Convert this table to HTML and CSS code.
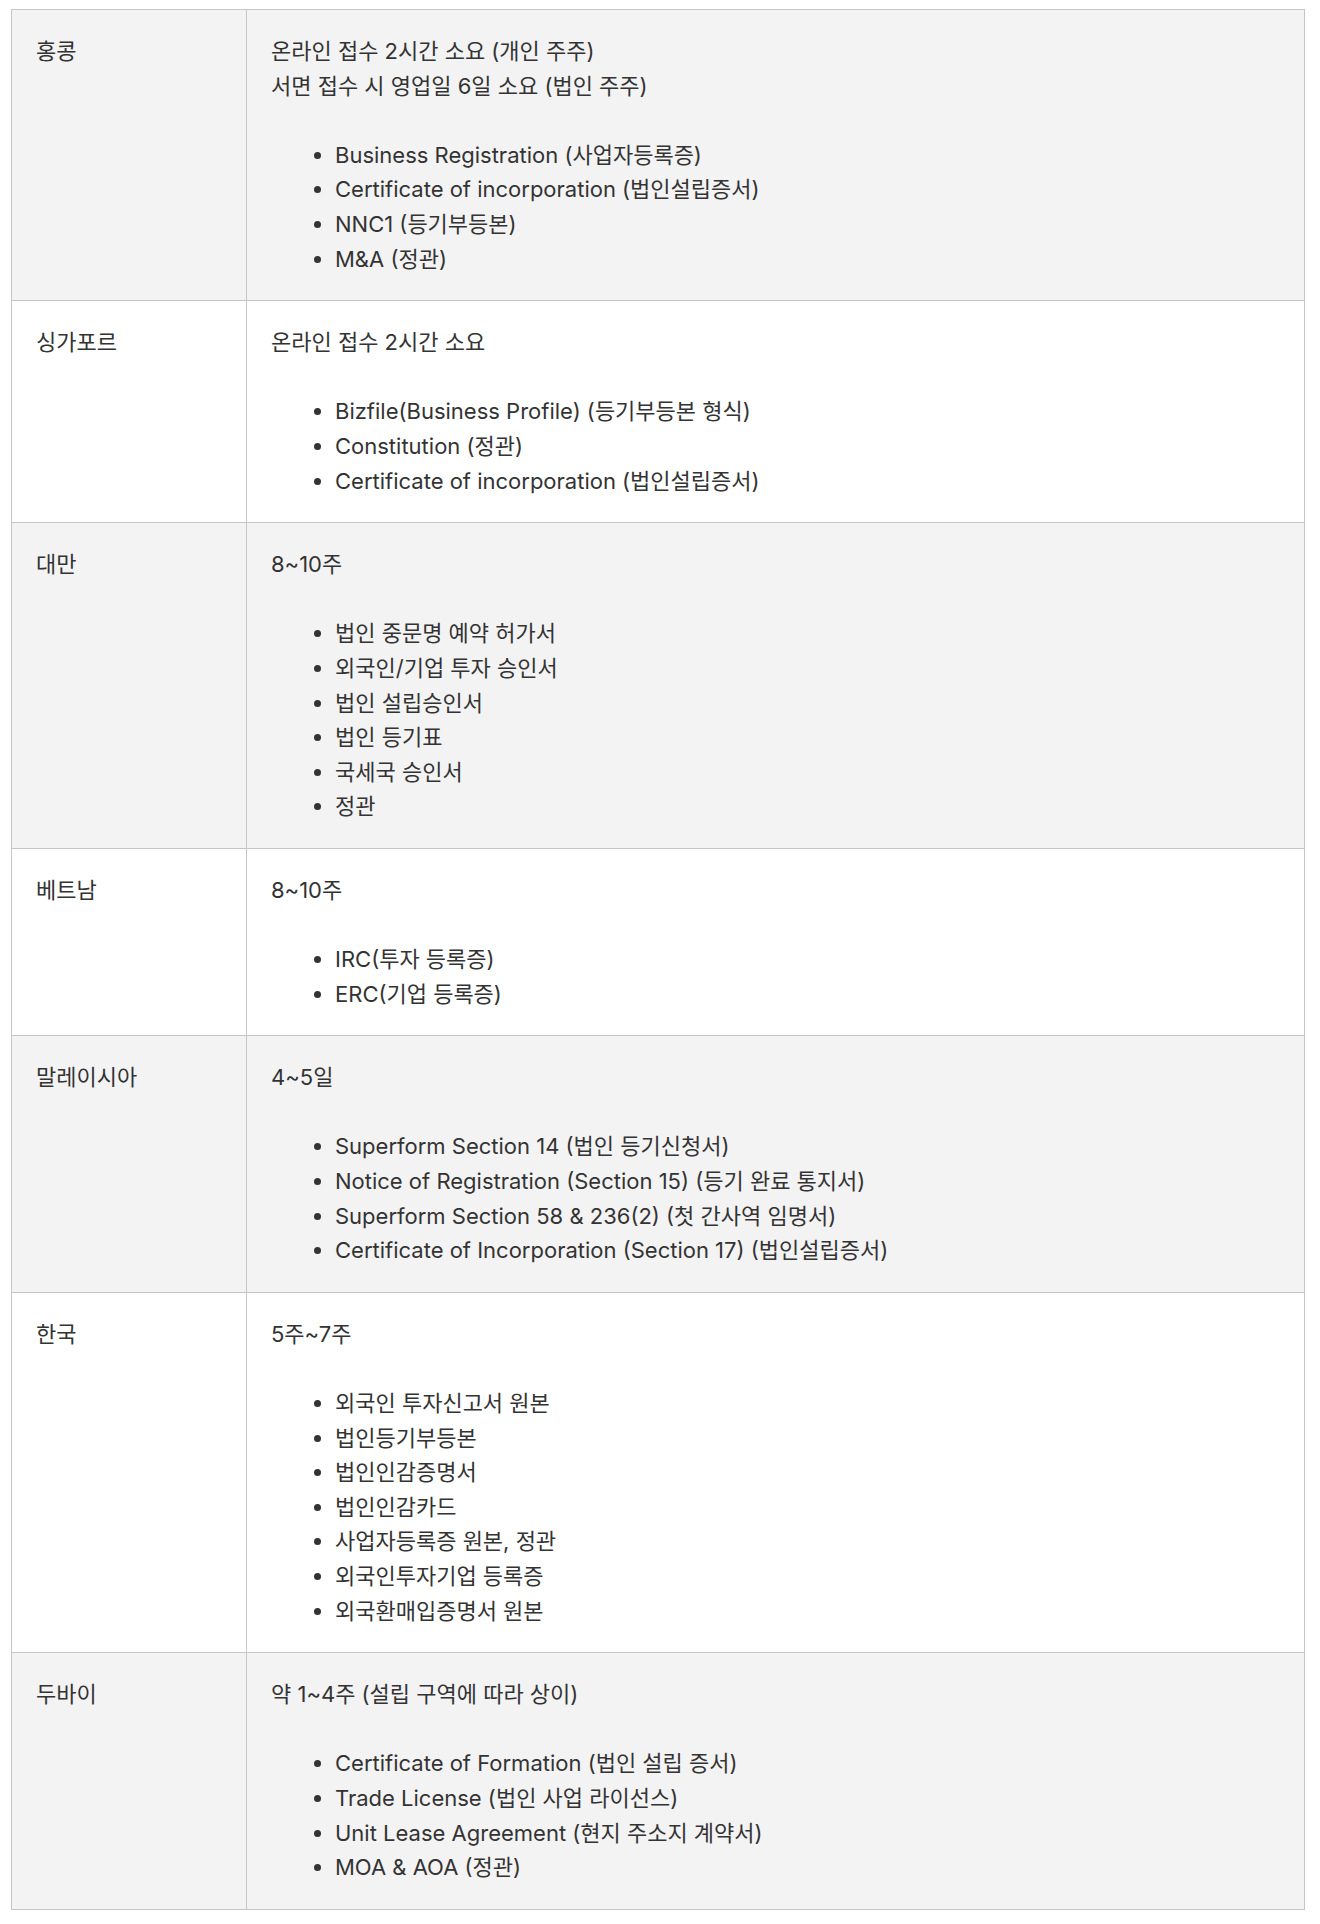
FILE: index.html
```html
<!DOCTYPE html>
<html lang="ko">
<head>
<meta charset="utf-8">
<title>법인 설립 기간 및 서류</title>
<link rel="stylesheet" href="styles.css">
</head>
<body>
<table class="docs">
  <colgroup><col class="c-country"><col class="c-detail"></colgroup>
  <tbody>
    <tr class="shade">
      <td class="country">홍콩</td>
      <td class="detail">
        <p>온라인 접수 2시간 소요 (개인 주주)<br>서면 접수 시 영업일 6일 소요 (법인 주주)</p>
        <ul>
          <li>Business Registration (사업자등록증)</li>
          <li>Certificate of incorporation (법인설립증서)</li>
          <li>NNC1 (등기부등본)</li>
          <li>M&amp;A (정관)</li>
        </ul>
      </td>
    </tr>
    <tr>
      <td class="country">싱가포르</td>
      <td class="detail">
        <p>온라인 접수 2시간 소요</p>
        <ul>
          <li>Bizfile(Business Profile) (등기부등본 형식)</li>
          <li>Constitution (정관)</li>
          <li>Certificate of incorporation (법인설립증서)</li>
        </ul>
      </td>
    </tr>
    <tr class="shade">
      <td class="country">대만</td>
      <td class="detail">
        <p>8~10주</p>
        <ul>
          <li>법인 중문명 예약 허가서</li>
          <li>외국인/기업 투자 승인서</li>
          <li>법인 설립승인서</li>
          <li>법인 등기표</li>
          <li>국세국 승인서</li>
          <li>정관</li>
        </ul>
      </td>
    </tr>
    <tr>
      <td class="country">베트남</td>
      <td class="detail">
        <p>8~10주</p>
        <ul>
          <li>IRC(투자 등록증)</li>
          <li>ERC(기업 등록증)</li>
        </ul>
      </td>
    </tr>
    <tr class="shade">
      <td class="country">말레이시아</td>
      <td class="detail">
        <p>4~5일</p>
        <ul>
          <li>Superform Section 14 (법인 등기신청서)</li>
          <li>Notice of Registration (Section 15) (등기 완료 통지서)</li>
          <li>Superform Section 58 &amp; 236(2) (첫 간사역 임명서)</li>
          <li>Certificate of Incorporation (Section 17) (법인설립증서)</li>
        </ul>
      </td>
    </tr>
    <tr>
      <td class="country">한국</td>
      <td class="detail">
        <p>5주~7주</p>
        <ul>
          <li>외국인 투자신고서 원본</li>
          <li>법인등기부등본</li>
          <li>법인인감증명서</li>
          <li>법인인감카드</li>
          <li>사업자등록증 원본, 정관</li>
          <li>외국인투자기업 등록증</li>
          <li>외국환매입증명서 원본</li>
        </ul>
      </td>
    </tr>
    <tr class="shade">
      <td class="country">두바이</td>
      <td class="detail">
        <p>약 1~4주 (설립 구역에 따라 상이)</p>
        <ul>
          <li>Certificate of Formation (법인 설립 증서)</li>
          <li>Trade License (법인 사업 라이선스)</li>
          <li>Unit Lease Agreement (현지 주소지 계약서)</li>
          <li>MOA &amp; AOA (정관)</li>
        </ul>
      </td>
    </tr>
  </tbody>
</table>
</body>
</html>
```

FILE: styles.css
```css
html, body {
  margin: 0;
  padding: 0;
  background: #ffffff;
}

body {
  font-family: Inter, "Noto Sans CJK KR", "Noto Sans", sans-serif;
  font-size: 22px;
  line-height: 34.6px;
  color: #333333;
}

.docs {
  border-collapse: collapse;
  width: 1294px;
  margin: 9px 0 0 11px;
  table-layout: fixed;
}

.c-country {
  width: 235px;
}

.docs td {
  border: 1px solid #c6c6c6;
  padding: 24px 25px 24px 24px;
  vertical-align: top;
}

.docs tr.shade td {
  background: #f3f3f3;
}

.detail p {
  margin: 0;
}

.detail ul {
  margin: 34.6px 0 0 0;
  padding: 0 0 0 64px;
}

.detail li {
  margin: 0;
}
```
